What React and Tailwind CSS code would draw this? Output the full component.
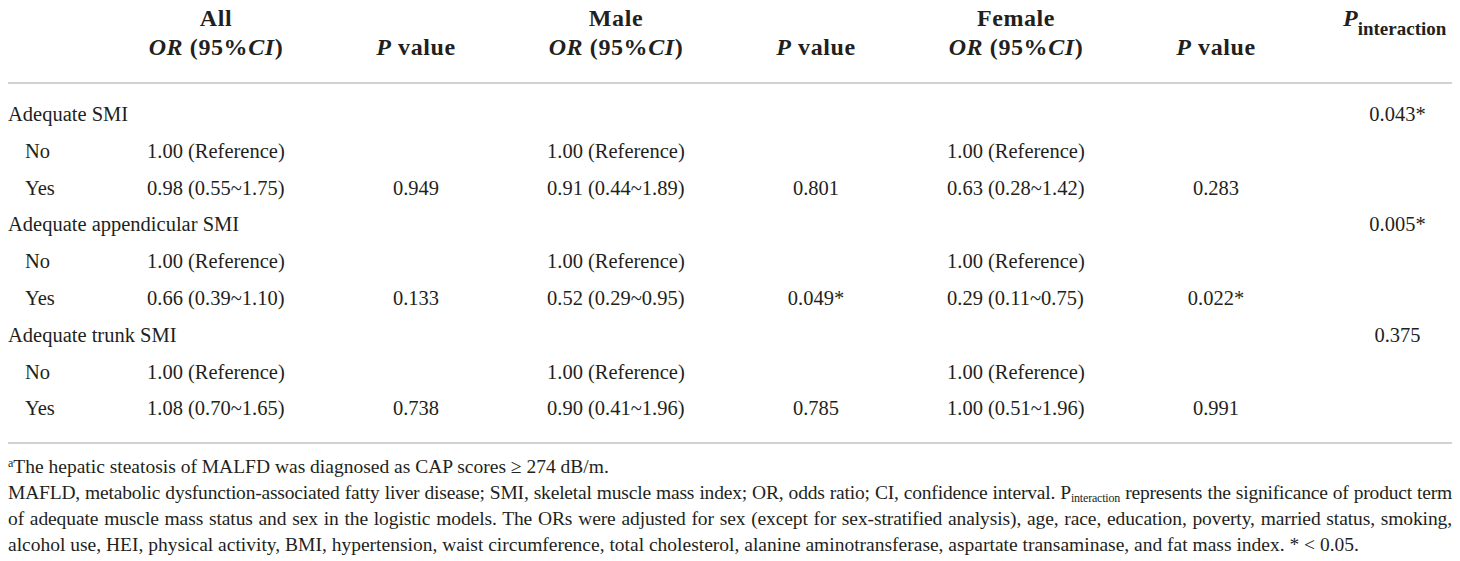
const groups = [
  {
    label: 'Adequate SMI',
    pint: '0.043*',
    yes: ['0.98 (0.55~1.75)', '0.949', '0.91 (0.44~1.89)', '0.801', '0.63 (0.28~1.42)', '0.283'],
  },
  {
    label: 'Adequate appendicular SMI',
    pint: '0.005*',
    yes: ['0.66 (0.39~1.10)', '0.133', '0.52 (0.29~0.95)', '0.049*', '0.29 (0.11~0.75)', '0.022*'],
  },
  {
    label: 'Adequate trunk SMI',
    pint: '0.375',
    yes: ['1.08 (0.70~1.65)', '0.738', '0.90 (0.41~1.96)', '0.785', '1.00 (0.51~1.96)', '0.991'],
  },
]

const cols = 'grid grid-cols-[108px_200px_200px_200px_200px_200px_200px_1fr]'

function OrCell({ children }) {
  return (
    <div className="flex justify-center">
      <span className="w-[138px] whitespace-nowrap">{children}</span>
    </div>
  )
}

function HeadOr({ title }) {
  return (
    <div className="text-center whitespace-nowrap">
      <div>{title}</div>
      <div>
        <i>OR</i> (95%<i>CI</i>)
      </div>
    </div>
  )
}

function HeadP() {
  return (
    <div className="flex flex-col justify-end text-center whitespace-nowrap">
      <div>
        <i>P</i> value
      </div>
    </div>
  )
}

export default function App() {
  return (
    <div
      className="w-[1460px] h-[561px] overflow-hidden bg-white px-[8px] text-[#231f20]"
      style={{ fontFamily: '"Liberation Serif", "DejaVu Serif", serif' }}
    >
      {/* header */}
      <div className={`${cols} pt-[4px] pb-[20px] text-[24px] font-bold leading-[29px] tracking-[0.6px] border-b-2 border-[#d2d2d2]`}>
        <div />
        <HeadOr title="All" />
        <HeadP />
        <HeadOr title="Male" />
        <HeadP />
        <HeadOr title="Female" />
        <HeadP />
        <div className="pl-[27px] whitespace-nowrap tracking-normal">
          <i>P</i>
          <sub className="text-[19px] align-[-4px]">interaction</sub>
        </div>
      </div>

      {/* body */}
      <div className="pt-[12px] pb-[15px] text-[20.5px] border-b-2 border-[#d2d2d2]">
        {groups.map(g => (
          <div key={g.label}>
            <div className={`${cols} h-[36.8px] items-center`}>
              <div className="col-span-7 whitespace-nowrap">{g.label}</div>
              <div className="pl-[27px] text-center">{g.pint}</div>
            </div>
            <div className={`${cols} h-[36.8px] items-center`}>
              <div className="pl-[17px]">No</div>
              <OrCell>1.00 (Reference)</OrCell>
              <div />
              <OrCell>1.00 (Reference)</OrCell>
              <div />
              <OrCell>1.00 (Reference)</OrCell>
              <div />
              <div />
            </div>
            <div className={`${cols} h-[36.8px] items-center`}>
              <div className="pl-[17px]">Yes</div>
              <OrCell>{g.yes[0]}</OrCell>
              <div className="text-center">{g.yes[1]}</div>
              <OrCell>{g.yes[2]}</OrCell>
              <div className="text-center">{g.yes[3]}</div>
              <OrCell>{g.yes[4]}</OrCell>
              <div className="text-center">{g.yes[5]}</div>
              <div />
            </div>
          </div>
        ))}
      </div>

      {/* footnotes */}
      <div className="pt-[10px] text-[19.5px] leading-[26px]">
        <div className="whitespace-nowrap">
          <sup className="text-[12px]">a</sup>The hepatic steatosis of MALFD was diagnosed as CAP scores ≥ 274 dB/m.
        </div>
        <div className="whitespace-nowrap tracking-[-0.2px] [text-align-last:justify]">
          MAFLD, metabolic dysfunction-associated fatty liver disease; SMI, skeletal muscle mass index; OR, odds ratio; CI, confidence interval. P
          <sub className="text-[12px]">interaction</sub> represents the significance of product term
        </div>
        <div className="whitespace-nowrap tracking-[-0.1px] [text-align-last:justify]">
          of adequate muscle mass status and sex in the logistic models. The ORs were adjusted for sex (except for sex-stratified analysis), age, race, education, poverty, married status, smoking,
        </div>
        <div className="whitespace-nowrap">
          alcohol use, HEI, physical activity, BMI, hypertension, waist circumference, total cholesterol, alanine aminotransferase, aspartate transaminase, and fat mass index. * &lt; 0.05.
        </div>
      </div>
    </div>
  )
}
